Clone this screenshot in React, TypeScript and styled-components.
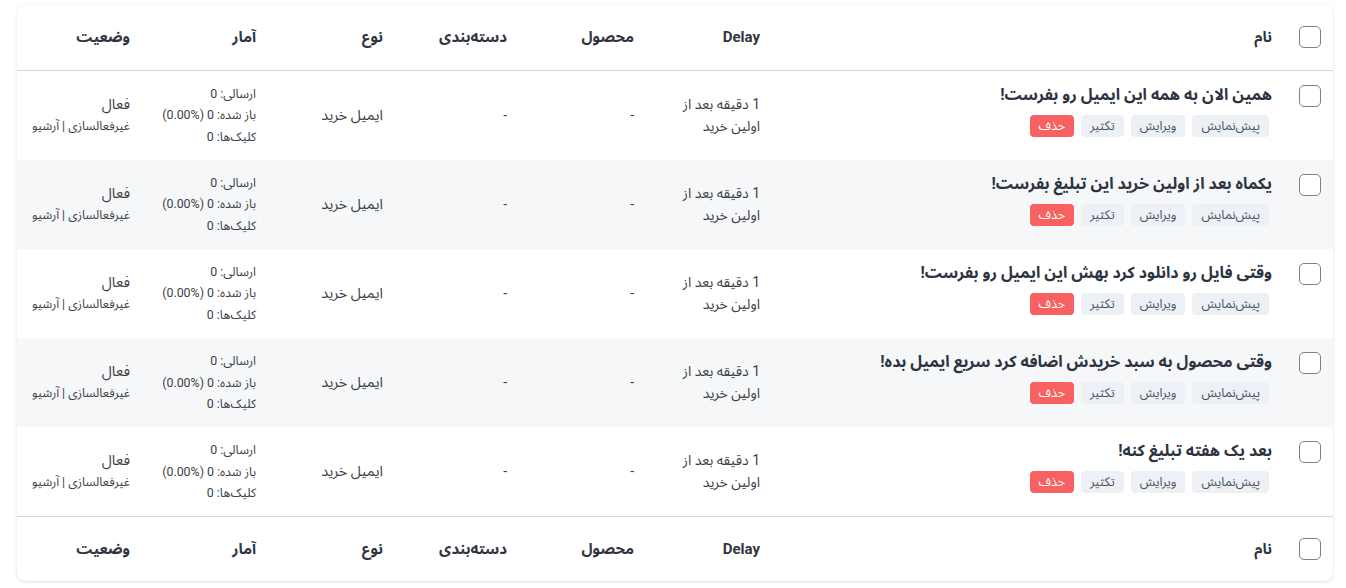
import React from "react";
import styled, { createGlobalStyle } from "styled-components";

const Global = createGlobalStyle`
  html, body { margin: 0; padding: 0; background: #ffffff; }
  body { font-family: Roboto, "Noto Sans Arabic", "DejaVu Sans", sans-serif; color: #3a3f47; }
  * { box-sizing: border-box; }
`;

const Page = styled.div`
  padding: 5px 13px 7px 17px;
`;

const Card = styled.div`
  background: #fff;
  border-radius: 8px;
  box-shadow: 0 1px 3px rgba(0, 0, 0, 0.13), 0 0 1px rgba(0, 0, 0, 0.06);
  overflow: hidden;
`;

const Table = styled.table`
  width: 100%;
  border-collapse: collapse;
  table-layout: fixed;
  direction: rtl;
`;

const HeadCell = styled.th<{ $pos: "top" | "bottom" }>`
  height: ${(p) => (p.$pos === "top" ? 65 : 64)}px;
  padding: 0 12px;
  text-align: right;
  font-size: 15px;
  font-weight: 700;
  color: #2f3540;
  vertical-align: middle;
  white-space: nowrap;
  ${(p) => (p.$pos === "top" ? "border-bottom: 1px solid #d6d6d6;" : "border-top: 1px solid #d6d6d6;")}
`;

const Row = styled.tr`
  &:nth-child(even) { background: #f6f7f9; }
`;

const Cell = styled.td<{ $top?: boolean }>`
  padding: 12px 12px;
  height: 89px;
  text-align: right;
  vertical-align: ${(p) => (p.$top ? "top" : "middle")};
  font-size: 14px;
  color: #3a3f47;
`;

const Box = styled.span`
  display: block;
  width: 22px;
  height: 22px;
  border: 1.3px solid #7d8188;
  border-radius: 5px;
  background: #fff;
  margin-top: 2px;
`;

const HeadBox = styled(Box)`
  margin-top: 0;
`;

const Title = styled.div`
  font-size: 16px;
  font-weight: 700;
  color: #2d3340;
  line-height: 24px;
`;

const Actions = styled.div`
  display: flex;
  gap: 7px;
  margin-top: 8px;
  padding-right: 3px;
`;

const Btn = styled.span<{ $danger?: boolean }>`
  display: inline-flex;
  align-items: center;
  height: 22px;
  padding: 0 9px;
  border-radius: 4px;
  font-size: 12.6px;
  background: ${(p) => (p.$danger ? "#f86161" : "#edf1f6")};
  color: ${(p) => (p.$danger ? "#ffffff" : "#4a5260")};
`;

const Lines = styled.div`
  line-height: 22px;
`;

const TypeText = styled.span`
  font-size: 14.5px;
`;

const Stats = styled.div`
  font-size: 12.4px;
  line-height: 21.7px;
  white-space: nowrap;
`;

const StatusMain = styled.div`
  font-size: 14.5px;
  line-height: 22px;
`;

const StatusSub = styled.div`
  font-size: 12.3px;
  line-height: 20px;
  white-space: nowrap;
`;

const titles = [
  "همین الان به همه این ایمیل رو بفرست!",
  "یکماه بعد از اولین خرید این تبلیغ بفرست!",
  "وقتی فایل رو دانلود کرد بهش این ایمیل رو بفرست!",
  "وقتی محصول به سبد خریدش اضافه کرد سریع ایمیل بده!",
  "بعد یک هفته تبلیغ کنه!",
];

const HeaderRow = ({ pos }: { pos: "top" | "bottom" }) => (
  <tr>
    <HeadCell $pos={pos}><HeadBox /></HeadCell>
    <HeadCell $pos={pos}>نام</HeadCell>
    <HeadCell $pos={pos}>Delay</HeadCell>
    <HeadCell $pos={pos}>محصول</HeadCell>
    <HeadCell $pos={pos}>دسته‌بندی</HeadCell>
    <HeadCell $pos={pos}>نوع</HeadCell>
    <HeadCell $pos={pos}>آمار</HeadCell>
    <HeadCell $pos={pos}>وضعیت</HeadCell>
  </tr>
);

export default function App() {
  return (
    <>
      <Global />
      <Page>
        <Card>
          <Table>
            <colgroup>
              <col style={{ width: 49 }} />
              <col />
              <col style={{ width: 126 }} />
              <col style={{ width: 127 }} />
              <col style={{ width: 124 }} />
              <col style={{ width: 127 }} />
              <col style={{ width: 126 }} />
              <col style={{ width: 125 }} />
            </colgroup>
            <thead>
              <HeaderRow pos="top" />
            </thead>
            <tbody>
              {titles.map((t) => (
                <Row key={t}>
                  <Cell $top><Box /></Cell>
                  <Cell $top>
                    <Title>{t}</Title>
                    <Actions>
                      <Btn>پیش‌نمایش</Btn>
                      <Btn>ویرایش</Btn>
                      <Btn>تکثیر</Btn>
                      <Btn $danger>حذف</Btn>
                    </Actions>
                  </Cell>
                  <Cell>
                    <Lines>1 دقیقه بعد از<br />اولین خرید</Lines>
                  </Cell>
                  <Cell>-</Cell>
                  <Cell>-</Cell>
                  <Cell><TypeText>ایمیل خرید</TypeText></Cell>
                  <Cell>
                    <Stats>
                      <div>ارسالی: 0</div>
                      <div>باز شده: 0 (%0.00)</div>
                      <div>کلیک‌ها: 0</div>
                    </Stats>
                  </Cell>
                  <Cell>
                    <StatusMain>فعال</StatusMain>
                    <StatusSub>غیرفعالسازی | آرشیو</StatusSub>
                  </Cell>
                </Row>
              ))}
            </tbody>
            <tfoot>
              <HeaderRow pos="bottom" />
            </tfoot>
          </Table>
        </Card>
      </Page>
    </>
  );
}
